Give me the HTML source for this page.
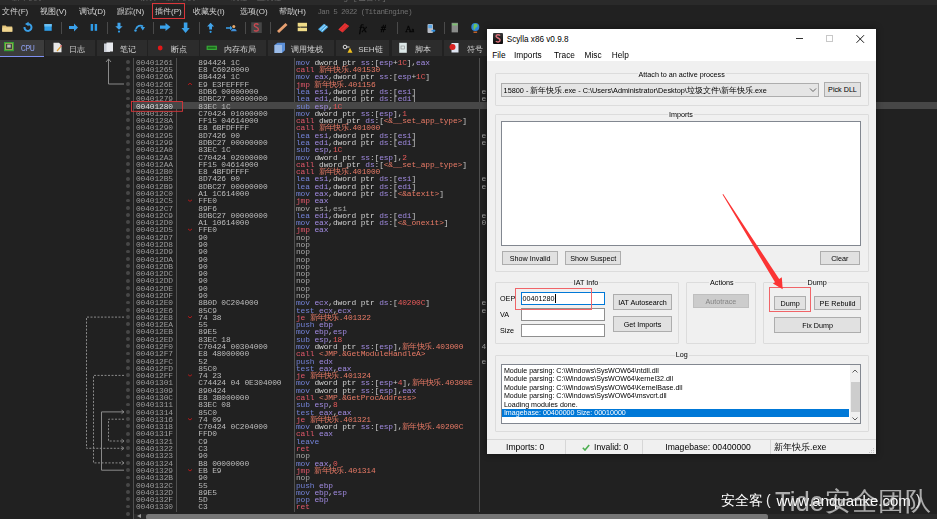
<!DOCTYPE html>
<html><head><meta charset="utf-8">
<style>
*{box-sizing:border-box}
html,body{margin:0;padding:0}
body{width:937px;height:519px;overflow:hidden;background:#212121;position:relative;font-family:"Liberation Sans",sans-serif}
.a{position:absolute}
#title{left:0;top:0;width:937px;height:5px;background:#2a2a2a;overflow:hidden}
#title span{position:absolute;top:-8.3px;left:12px;font-size:8px;color:#6a6a6a;white-space:pre;font-family:"Liberation Mono",monospace}
.mi{position:absolute;top:7px;font-size:8px;color:#d4d4d4;white-space:pre;line-height:10px}
.sep{position:absolute;top:22px;width:1px;height:12px;background:#4a4a4a}
.tab{position:absolute;top:40px;height:16px;background:#2c2c2c;font-size:8px;color:#cfcfcf;line-height:19.5px;white-space:pre}
.tab.act{background:#3c3c3c;color:#8b9be6}
.r{position:absolute;left:0;width:937px;height:7.287px;font-family:"Liberation Mono",monospace;font-size:7.9px;letter-spacing:-0.12px;line-height:7.287px;white-space:pre}
.r span.ad,.r span.hx,.r span.ds,.r span.cm2{top:0.4px}
.r.sel{background:linear-gradient(to right,transparent 134px,#474747 134px)}
.r.sel .ad{color:#dedede}
.dot{position:absolute;left:126.4px;top:1.7px;width:3.8px;height:3.8px;border-radius:50%;background:#474747}
.ad{position:absolute;left:136px;color:#9c9c9c}
.hx{position:absolute;left:198.3px;color:#bcbcbc}
.ds{position:absolute;left:296px}
.cj{font-size:7.6px;letter-spacing:-0.8px;display:inline-block;width:28.8px;white-space:nowrap}
.cm2{position:absolute;left:481.5px;color:#a0a0a0}
.cr{color:#e0586a}.cn{color:#a8a8a8}.cm{color:#7382d6}
.cs{color:#e87a66}.cw{color:#d2d2d2}.cg{color:#a08ae0}.cnum{color:#e85a5a}.cp{color:#c8c8c8}
.vl{position:absolute;width:1px;background:#4f4f4f}
/* scylla */
#sc{left:487px;top:29px;width:388.6px;height:424.6px;background:#f0f0f0;overflow:hidden;box-shadow:0 0 7px rgba(0,0,0,0.45)}
.t{position:absolute;white-space:pre;color:#000;font-size:7.2px;line-height:9px}
.grp{position:absolute;border:1px solid #dcdcdc;border-radius:1px}
.gl{position:absolute;background:#f0f0f0;font-size:7.2px;line-height:9px;color:#000;white-space:pre;padding:0 1px}
.btn{position:absolute;background:#e1e1e1;border:1px solid #adadad;font-size:7.2px;color:#000;text-align:center;white-space:pre;padding-top:1px}
.ed{position:absolute;background:#fff;border:1px solid #8f8f8f}
.lst{position:absolute;background:#fff;border:1px solid #828790}
</style></head><body>
<div class="a" style="left:0;top:0;width:937px;height:519px;will-change:transform">
<div id="title" class="a"><span>新年快乐.exe - PID: 15800 - 模块: 新年快乐.exe - 线程: 主线程 3BB0 - x64dbg [已暂停]</span></div>
<!-- menu -->
<div class="mi" style="left:2px">文件(F)</div>
<div class="mi" style="left:40px">视图(V)</div>
<div class="mi" style="left:78.5px">调试(D)</div>
<div class="mi" style="left:117px">跟踪(N)</div>
<div class="mi" style="left:155px">插件(P)</div>
<div class="mi" style="left:193px">收藏夹(I)</div>
<div class="mi" style="left:240px">选项(O)</div>
<div class="mi" style="left:278.7px">帮助(H)</div>
<div class="mi" style="left:317.4px;color:#6f6f6f;font-family:'Liberation Mono',monospace;font-size:7.6px;letter-spacing:-0.62px;top:6.5px">Jan 5 2022 (TitanEngine)</div>
<div class="a" style="left:151.5px;top:2.5px;width:33.5px;height:16.5px;border:1px solid #d9363a"></div>
<!-- toolbar -->
<div id="tb">
<div class="sep" style="left:61.3px"></div><div class="sep" style="left:107.2px"></div><div class="sep" style="left:152.7px"></div>
<div class="sep" style="left:198.5px"></div><div class="sep" style="left:244.8px"></div><div class="sep" style="left:269.6px"></div>
<div class="sep" style="left:397.4px"></div><div class="sep" style="left:443.6px"></div>
<svg class="a" style="left:0;top:20px" width="490" height="16" viewBox="0 20 490 16">
<!-- folder -->
<path d="M2.2 25.5 h3.5 l1 1 h5.5 v5 h-10z" fill="#e2c37a"/><path d="M2.2 27.5 h10.2 v4.2 h-10.2z" fill="#f0d690"/>
<!-- refresh -->
<path d="M24.5 27 A3.5 3.5 0 1 0 28.2 23.9" stroke="#3aa0e8" stroke-width="2" fill="none"/><path d="M28.6 21.8 v4.4 l-3.6 -2.2z" fill="#3aa0e8"/>
<!-- stop -->
<rect x="44.4" y="24" width="7.3" height="6.8" fill="#2f9ee8"/><rect x="44.4" y="24" width="7.3" height="2.5" fill="#6cc0f2"/>
<!-- arrow right -->
<path d="M69 26 h5 v-2.5 l4 4 l-4 4 v-2.5 h-5z" fill="#3aa0ea"/>
<!-- pause -->
<rect x="90.7" y="24" width="2.4" height="6.8" fill="#2e9ce8"/><rect x="94.7" y="24" width="2.4" height="6.8" fill="#2e9ce8"/>
<!-- step into -->
<path d="M117.5 22.7 h3 v3.5 h2.2 l-3.7 3.5 l-3.7 -3.5 h2.2z" fill="#42a4ea"/><circle cx="119" cy="31.6" r="1.1" fill="#2e9ce8"/>
<!-- step over -->
<path d="M136 29 A4.5 4.5 0 0 1 143 26.5" stroke="#3ba0e6" stroke-width="1.8" fill="none"/><path d="M140.5 27 h4.5 l-2.2 3.5z" fill="#3ba0e6"/><circle cx="135.5" cy="30.5" r="1.2" fill="#3ba0e6"/>
<!-- big arrow right -->
<path d="M160 25.5 h5.5 v-2.4 l5 4 l-5 4 v-2.4 h-5.5z" fill="#3aa2ea"/>
<!-- down arrow -->
<path d="M183.8 22.5 h3.6 v5.5 h2.3 l-4.1 5 l-4.1 -5 h2.3z" fill="#3aa2ea"/>
<!-- up arrow -->
<path d="M210.6 22.7 l3.5 3.7 h-2.1 v3 h-2.8 v-3 h-2.1z" fill="#42a4ea"/><circle cx="210.6" cy="31.8" r="1.1" fill="#2e9ce8"/>
<!-- arrow+person -->
<path d="M226 27.3 h4 v-1.6 l2.5 2.3 l-2.5 2.3 v-1.6 h-4z" fill="#3aa0ea"/><circle cx="233.8" cy="26.5" r="1.5" fill="#e8a868"/><path d="M231 31.3 a2.8 2.5 0 0 1 5.6 0z" fill="#3e8ed8"/>
<!-- S icon -->
<rect x="251.2" y="22.3" width="10.6" height="10.7" fill="#464646"/>
<!-- bandage -->
<path d="M277 31 l8.5 -8 l2 2 l-8.5 8z" fill="#e8a070"/>
<!-- bubbles -->
<rect x="297.7" y="22.8" width="9.3" height="3.8" fill="#f0dc88"/><rect x="297.7" y="27.7" width="9.3" height="3.5" fill="#f0dc88"/><path d="M299 26.6 l1.5 1.2 v-1.2z" fill="#f0dc88"/>
<!-- blue striped -->
<path d="M318 29.3 l6 -5.6 l4.3 3.2 l-6 5.6z" fill="#4aaee8"/><path d="M319.8 29.6 l5.4 -5" stroke="#e8f0ff" stroke-width="0.7"/><path d="M321.8 31.1 l5.4 -5" stroke="#e8f0ff" stroke-width="0.7"/>
<!-- red striped -->
<path d="M338.3 29.5 l6.6 -6.4 l4.3 3 l-6.6 6.4z" fill="#e83434"/><path d="M340.3 30 l5.6 -5.3 M342.3 31.3 l5.6 -5.3" stroke="#b01818" stroke-width="0.5"/>
<!-- fx # Aa -->
<text x="359" y="31.5" font-family="Liberation Serif" font-style="italic" font-size="11" fill="#050505" stroke="#050505" stroke-width="0.3">fx</text>
<text x="380.8" y="31.5" font-family="Liberation Serif" font-style="italic" font-size="10" fill="#050505" stroke="#050505" stroke-width="0.4">#</text>
<text x="405.3" y="31.5" font-family="Liberation Serif" font-size="9" fill="#050505" stroke="#050505" stroke-width="0.3">A</text><text x="411.5" y="31.5" font-family="Liberation Serif" font-size="6" fill="#050505" stroke="#050505" stroke-width="0.3">a</text>
<!-- phone -->
<rect x="427.5" y="23.9" width="5.5" height="9" rx="1" fill="#b8bcc4"/><rect x="428.3" y="24.7" width="3.9" height="3.5" fill="#5aa8e8"/><path d="M431.5 30 h2 v-1.2 l2.1 1.9 l-2.1 1.9 v-1.2 h-2z" fill="#2e90e0"/>
<!-- calculator -->
<rect x="451.6" y="22.8" width="6.4" height="9.6" fill="#8a8c8a"/><rect x="452.2" y="23.6" width="5.2" height="1.8" fill="#7cc070"/>
<!-- globe -->
<circle cx="475.3" cy="27" r="4" fill="#2e86dc"/><path d="M474 24 q2.5 -1 3.5 1 q0.5 2 -1.5 2.5 q-1 1 -1.5 2.5 q-1.5 -1 -1 -3z" fill="#6cc05a"/><rect x="473.5" y="31.6" width="3.6" height="1.2" fill="#e07030"/>
</svg>
<svg class="a" style="left:251.2px;top:22.3px" width="11" height="11"><path d="M7.4 2.7 C6.3 1.3 3.3 1.4 3.3 3.4 C3.3 5.3 7.4 5 7.4 7.2 C7.4 9.3 4.2 9.6 3.1 8.2" stroke="#c84850" stroke-width="1.4" fill="none"/></svg>
</div>
<!-- tabs -->
<div id="tabs">
<div class="tab act" style="left:0;width:43.8px"><span class="a" style="left:20.8px;font-family:'Liberation Mono',monospace;font-size:8.5px;letter-spacing:-0.6px">CPU</span></div>
<div class="a" style="left:0;top:55.8px;width:43.8px;height:1.3px;background:#7e8ff0"></div>
<div class="tab" style="left:45.1px;width:50.4px"><span class="a" style="left:23.6px">日志</span></div>
<div class="tab" style="left:97.2px;width:49.5px"><span class="a" style="left:23.1px">笔记</span></div>
<div class="tab" style="left:148.4px;width:50.4px"><span class="a" style="left:23.1px">断点</span></div>
<div class="tab" style="left:200.1px;width:65.8px"><span class="a" style="left:23.9px">内存布局</span></div>
<div class="tab" style="left:268.1px;width:66.1px"><span class="a" style="left:23.4px">调用堆栈</span></div>
<div class="tab" style="left:336px;width:53.4px"><span class="a" style="left:22.2px">SEH链</span></div>
<div class="tab" style="left:391.5px;width:50.4px"><span class="a" style="left:23px">脚本</span></div>
<div class="tab" style="left:443.6px;width:50px"><span class="a" style="left:23px">符号</span></div>
<svg class="a" style="left:0;top:40px" width="490" height="16" viewBox="0 40 490 16">
<rect x="4" y="42" width="9.9" height="9.2" fill="#35a035"/><rect x="5.4" y="43.2" width="7.1" height="6.6" fill="#d8c860"/><rect x="5.9" y="43.7" width="6.1" height="5.6" fill="#404040"/><rect x="7.2" y="44.6" width="3.5" height="3" fill="#bbb"/>
<path d="M53.5 42.8 h5.5 l2.5 2.5 v7 h-8z" fill="#e8e8e8"/><path d="M57 51 l3.5 -4" stroke="#e0a030" stroke-width="1.2"/><circle cx="61" cy="46" r="0.8" fill="#e03030"/>
<rect x="104" y="43.5" width="6" height="8.5" fill="#c8ccd4"/><rect x="106.5" y="42.5" width="6.5" height="9" fill="#e8eaee"/>
<circle cx="160.2" cy="48" r="2.4" fill="#e01818"/>
<rect x="206.6" y="45.7" width="10.3" height="4.3" fill="#38a838"/><rect x="207.8" y="46.8" width="7.9" height="2" fill="#1e6e1e"/>
<path d="M274.5 45 l3 -2.2 h7.5 v7.5 l-3 2.7 h-7.5z" fill="#5b8fd8"/><rect x="274.5" y="45" width="7.5" height="8" fill="#9cbce8"/>
<circle cx="345" cy="47" r="1.8" fill="none" stroke="#ddd" stroke-width="1"/><path d="M346.5 47 h3" stroke="#ddd" stroke-width="1"/><path d="M347.5 52.8 l2.5 -5 l2.5 5z" fill="#f0c020"/>
<rect x="399.2" y="42.8" width="7.6" height="10" fill="#dde8e8"/><rect x="401" y="46" width="3.5" height="3" fill="none" stroke="#888" stroke-width="0.6"/>
<rect x="451.5" y="43" width="7" height="9.5" fill="#dfe6f2"/><circle cx="452.5" cy="47" r="3" fill="#d82020"/>
</svg>
</div>
<!-- disasm -->
<div class="vl" style="left:133px;top:57.5px;height:462px"></div>
<div class="vl" style="left:176.3px;top:57.5px;height:454px"></div>
<div class="vl" style="left:293.5px;top:57.5px;height:454px"></div>
<div class="vl" style="left:478.5px;top:57.5px;height:454px"></div>
<div class="r" style="top:58.46px"><i class="dot"></i><span class="ad">00401261</span><span class="hx">894424 1C</span><span class="ds"><span class="cm">mov</span> <span class="cw">dword ptr</span><span class="cp"> </span><span class="cg">ss</span><span class="cp">:</span><span class="cp">[</span><span class="cg">esp</span><span class="cp">+</span><span class="cnum">1C</span><span class="cp">]</span><span class="cp">,</span><span class="cg">eax</span></span><span class="cm2"></span></div>
<div class="r" style="top:65.75px"><i class="dot"></i><span class="ad">00401265</span><span class="hx">E8 C6020000</span><span class="ds"><span class="cr">call</span> <span class="cs"><span class="cj">新年快乐</span>.401530</span></span><span class="cm2"></span></div>
<div class="r" style="top:73.03px"><i class="dot"></i><span class="ad">0040126A</span><span class="hx">8B4424 1C</span><span class="ds"><span class="cm">mov</span> <span class="cg">eax</span><span class="cp">,</span><span class="cw">dword ptr</span><span class="cp"> </span><span class="cg">ss</span><span class="cp">:</span><span class="cp">[</span><span class="cg">esp</span><span class="cp">+</span><span class="cnum">1C</span><span class="cp">]</span></span><span class="cm2"></span></div>
<div class="r" style="top:80.32px"><i class="dot"></i><span class="ad">0040126E</span><span class="hx">E9 E3FEFFFF</span><span class="ds"><span class="cr">jmp</span> <span class="cs"><span class="cj">新年快乐</span>.401156</span></span><span class="cm2"></span></div>
<div class="r" style="top:87.61px"><i class="dot"></i><span class="ad">00401273</span><span class="hx">8DB6 00000000</span><span class="ds"><span class="cm">lea</span> <span class="cg">esi</span><span class="cp">,</span><span class="cw">dword ptr</span><span class="cp"> </span><span class="cg">ds</span><span class="cp">:</span><span class="cp">[</span><span class="cg">esi</span><span class="cp">]</span></span><span class="cm2">e</span></div>
<div class="r" style="top:94.90px"><i class="dot"></i><span class="ad">00401279</span><span class="hx">8DBC27 00000000</span><span class="ds"><span class="cm">lea</span> <span class="cg">edi</span><span class="cp">,</span><span class="cw">dword ptr</span><span class="cp"> </span><span class="cg">ds</span><span class="cp">:</span><span class="cp">[</span><span class="cg">edi</span><span class="cp">]</span></span><span class="cm2">e</span></div>
<div class="r sel" style="top:102.18px"><i class="dot"></i><span class="ad">00401280</span><span class="hx">83EC 1C</span><span class="ds"><span class="cm">sub</span> <span class="cg">esp</span><span class="cp">,</span><span class="cnum">1C</span></span><span class="cm2"></span></div>
<div class="r" style="top:109.47px"><i class="dot"></i><span class="ad">00401283</span><span class="hx">C70424 01000000</span><span class="ds"><span class="cm">mov</span> <span class="cw">dword ptr</span><span class="cp"> </span><span class="cg">ss</span><span class="cp">:</span><span class="cp">[</span><span class="cg">esp</span><span class="cp">]</span><span class="cp">,</span><span class="cnum">1</span></span><span class="cm2"></span></div>
<div class="r" style="top:116.76px"><i class="dot"></i><span class="ad">0040128A</span><span class="hx">FF15 04614000</span><span class="ds"><span class="cr">call</span> <span class="cw">dword ptr</span><span class="cp"> </span><span class="cg">ds</span><span class="cp">:</span><span class="cp">[</span><span class="cs">&lt;&amp;__set_app_type&gt;</span><span class="cp">]</span></span><span class="cm2"></span></div>
<div class="r" style="top:124.04px"><i class="dot"></i><span class="ad">00401290</span><span class="hx">E8 6BFDFFFF</span><span class="ds"><span class="cr">call</span> <span class="cs"><span class="cj">新年快乐</span>.401000</span></span><span class="cm2"></span></div>
<div class="r" style="top:131.33px"><i class="dot"></i><span class="ad">00401295</span><span class="hx">8D7426 00</span><span class="ds"><span class="cm">lea</span> <span class="cg">esi</span><span class="cp">,</span><span class="cw">dword ptr</span><span class="cp"> </span><span class="cg">ds</span><span class="cp">:</span><span class="cp">[</span><span class="cg">esi</span><span class="cp">]</span></span><span class="cm2">e</span></div>
<div class="r" style="top:138.62px"><i class="dot"></i><span class="ad">00401299</span><span class="hx">8DBC27 00000000</span><span class="ds"><span class="cm">lea</span> <span class="cg">edi</span><span class="cp">,</span><span class="cw">dword ptr</span><span class="cp"> </span><span class="cg">ds</span><span class="cp">:</span><span class="cp">[</span><span class="cg">edi</span><span class="cp">]</span></span><span class="cm2">e</span></div>
<div class="r" style="top:145.90px"><i class="dot"></i><span class="ad">004012A0</span><span class="hx">83EC 1C</span><span class="ds"><span class="cm">sub</span> <span class="cg">esp</span><span class="cp">,</span><span class="cnum">1C</span></span><span class="cm2"></span></div>
<div class="r" style="top:153.19px"><i class="dot"></i><span class="ad">004012A3</span><span class="hx">C70424 02000000</span><span class="ds"><span class="cm">mov</span> <span class="cw">dword ptr</span><span class="cp"> </span><span class="cg">ss</span><span class="cp">:</span><span class="cp">[</span><span class="cg">esp</span><span class="cp">]</span><span class="cp">,</span><span class="cnum">2</span></span><span class="cm2"></span></div>
<div class="r" style="top:160.48px"><i class="dot"></i><span class="ad">004012AA</span><span class="hx">FF15 04614000</span><span class="ds"><span class="cr">call</span> <span class="cw">dword ptr</span><span class="cp"> </span><span class="cg">ds</span><span class="cp">:</span><span class="cp">[</span><span class="cs">&lt;&amp;__set_app_type&gt;</span><span class="cp">]</span></span><span class="cm2"></span></div>
<div class="r" style="top:167.76px"><i class="dot"></i><span class="ad">004012B0</span><span class="hx">E8 4BFDFFFF</span><span class="ds"><span class="cr">call</span> <span class="cs"><span class="cj">新年快乐</span>.401000</span></span><span class="cm2"></span></div>
<div class="r" style="top:175.05px"><i class="dot"></i><span class="ad">004012B5</span><span class="hx">8D7426 00</span><span class="ds"><span class="cm">lea</span> <span class="cg">esi</span><span class="cp">,</span><span class="cw">dword ptr</span><span class="cp"> </span><span class="cg">ds</span><span class="cp">:</span><span class="cp">[</span><span class="cg">esi</span><span class="cp">]</span></span><span class="cm2">e</span></div>
<div class="r" style="top:182.34px"><i class="dot"></i><span class="ad">004012B9</span><span class="hx">8DBC27 00000000</span><span class="ds"><span class="cm">lea</span> <span class="cg">edi</span><span class="cp">,</span><span class="cw">dword ptr</span><span class="cp"> </span><span class="cg">ds</span><span class="cp">:</span><span class="cp">[</span><span class="cg">edi</span><span class="cp">]</span></span><span class="cm2">e</span></div>
<div class="r" style="top:189.63px"><i class="dot"></i><span class="ad">004012C0</span><span class="hx">A1 1C614000</span><span class="ds"><span class="cm">mov</span> <span class="cg">eax</span><span class="cp">,</span><span class="cw">dword ptr</span><span class="cp"> </span><span class="cg">ds</span><span class="cp">:</span><span class="cp">[</span><span class="cs">&lt;&amp;atexit&gt;</span><span class="cp">]</span></span><span class="cm2"></span></div>
<div class="r" style="top:196.91px"><i class="dot"></i><span class="ad">004012C5</span><span class="hx">FFE0</span><span class="ds"><span class="cr">jmp</span> <span class="cg">eax</span></span><span class="cm2"></span></div>
<div class="r" style="top:204.20px"><i class="dot"></i><span class="ad">004012C7</span><span class="hx">89F6</span><span class="ds"><span class="cn">mov esi,esi</span></span><span class="cm2"></span></div>
<div class="r" style="top:211.49px"><i class="dot"></i><span class="ad">004012C9</span><span class="hx">8DBC27 00000000</span><span class="ds"><span class="cm">lea</span> <span class="cg">edi</span><span class="cp">,</span><span class="cw">dword ptr</span><span class="cp"> </span><span class="cg">ds</span><span class="cp">:</span><span class="cp">[</span><span class="cg">edi</span><span class="cp">]</span></span><span class="cm2">e</span></div>
<div class="r" style="top:218.77px"><i class="dot"></i><span class="ad">004012D0</span><span class="hx">A1 10614000</span><span class="ds"><span class="cm">mov</span> <span class="cg">eax</span><span class="cp">,</span><span class="cw">dword ptr</span><span class="cp"> </span><span class="cg">ds</span><span class="cp">:</span><span class="cp">[</span><span class="cs">&lt;&amp;_onexit&gt;</span><span class="cp">]</span></span><span class="cm2">0</span></div>
<div class="r" style="top:226.06px"><i class="dot"></i><span class="ad">004012D5</span><span class="hx">FFE0</span><span class="ds"><span class="cr">jmp</span> <span class="cg">eax</span></span><span class="cm2"></span></div>
<div class="r" style="top:233.35px"><i class="dot"></i><span class="ad">004012D7</span><span class="hx">90</span><span class="ds"><span class="cn">nop</span></span><span class="cm2"></span></div>
<div class="r" style="top:240.64px"><i class="dot"></i><span class="ad">004012D8</span><span class="hx">90</span><span class="ds"><span class="cn">nop</span></span><span class="cm2"></span></div>
<div class="r" style="top:247.92px"><i class="dot"></i><span class="ad">004012D9</span><span class="hx">90</span><span class="ds"><span class="cn">nop</span></span><span class="cm2"></span></div>
<div class="r" style="top:255.21px"><i class="dot"></i><span class="ad">004012DA</span><span class="hx">90</span><span class="ds"><span class="cn">nop</span></span><span class="cm2"></span></div>
<div class="r" style="top:262.50px"><i class="dot"></i><span class="ad">004012DB</span><span class="hx">90</span><span class="ds"><span class="cn">nop</span></span><span class="cm2"></span></div>
<div class="r" style="top:269.78px"><i class="dot"></i><span class="ad">004012DC</span><span class="hx">90</span><span class="ds"><span class="cn">nop</span></span><span class="cm2"></span></div>
<div class="r" style="top:277.07px"><i class="dot"></i><span class="ad">004012DD</span><span class="hx">90</span><span class="ds"><span class="cn">nop</span></span><span class="cm2"></span></div>
<div class="r" style="top:284.36px"><i class="dot"></i><span class="ad">004012DE</span><span class="hx">90</span><span class="ds"><span class="cn">nop</span></span><span class="cm2"></span></div>
<div class="r" style="top:291.64px"><i class="dot"></i><span class="ad">004012DF</span><span class="hx">90</span><span class="ds"><span class="cn">nop</span></span><span class="cm2"></span></div>
<div class="r" style="top:298.93px"><i class="dot"></i><span class="ad">004012E0</span><span class="hx">8B0D 0C204000</span><span class="ds"><span class="cm">mov</span> <span class="cg">ecx</span><span class="cp">,</span><span class="cw">dword ptr</span><span class="cp"> </span><span class="cg">ds</span><span class="cp">:</span><span class="cp">[</span><span class="cnum">40200C</span><span class="cp">]</span></span><span class="cm2">e</span></div>
<div class="r" style="top:306.22px"><i class="dot"></i><span class="ad">004012E6</span><span class="hx">85C9</span><span class="ds"><span class="cm">test</span> <span class="cg">ecx</span><span class="cp">,</span><span class="cg">ecx</span></span><span class="cm2">e</span></div>
<div class="r" style="top:313.50px"><i class="dot"></i><span class="ad">004012E8</span><span class="hx">74 38</span><span class="ds"><span class="cr">je</span> <span class="cs"><span class="cj">新年快乐</span>.401322</span></span><span class="cm2"></span></div>
<div class="r" style="top:320.79px"><i class="dot"></i><span class="ad">004012EA</span><span class="hx">55</span><span class="ds"><span class="cm">push</span> <span class="cg">ebp</span></span><span class="cm2"></span></div>
<div class="r" style="top:328.08px"><i class="dot"></i><span class="ad">004012EB</span><span class="hx">89E5</span><span class="ds"><span class="cm">mov</span> <span class="cg">ebp</span><span class="cp">,</span><span class="cg">esp</span></span><span class="cm2"></span></div>
<div class="r" style="top:335.37px"><i class="dot"></i><span class="ad">004012ED</span><span class="hx">83EC 18</span><span class="ds"><span class="cm">sub</span> <span class="cg">esp</span><span class="cp">,</span><span class="cnum">18</span></span><span class="cm2"></span></div>
<div class="r" style="top:342.65px"><i class="dot"></i><span class="ad">004012F0</span><span class="hx">C70424 00304000</span><span class="ds"><span class="cm">mov</span> <span class="cw">dword ptr</span><span class="cp"> </span><span class="cg">ss</span><span class="cp">:</span><span class="cp">[</span><span class="cg">esp</span><span class="cp">]</span><span class="cp">,</span><span class="cs"><span class="cj">新年快乐</span>.403000</span></span><span class="cm2">4</span></div>
<div class="r" style="top:349.94px"><i class="dot"></i><span class="ad">004012F7</span><span class="hx">E8 48000000</span><span class="ds"><span class="cr">call</span> <span class="cs">&lt;JMP.&amp;GetModuleHandleA&gt;</span></span><span class="cm2"></span></div>
<div class="r" style="top:357.23px"><i class="dot"></i><span class="ad">004012FC</span><span class="hx">52</span><span class="ds"><span class="cm">push</span> <span class="cg">edx</span></span><span class="cm2">e</span></div>
<div class="r" style="top:364.51px"><i class="dot"></i><span class="ad">004012FD</span><span class="hx">85C0</span><span class="ds"><span class="cm">test</span> <span class="cg">eax</span><span class="cp">,</span><span class="cg">eax</span></span><span class="cm2"></span></div>
<div class="r" style="top:371.80px"><i class="dot"></i><span class="ad">004012FF</span><span class="hx">74 23</span><span class="ds"><span class="cr">je</span> <span class="cs"><span class="cj">新年快乐</span>.401324</span></span><span class="cm2"></span></div>
<div class="r" style="top:379.09px"><i class="dot"></i><span class="ad">00401301</span><span class="hx">C74424 04 0E304000</span><span class="ds"><span class="cm">mov</span> <span class="cw">dword ptr</span><span class="cp"> </span><span class="cg">ss</span><span class="cp">:</span><span class="cp">[</span><span class="cg">esp</span><span class="cp">+</span><span class="cnum">4</span><span class="cp">]</span><span class="cp">,</span><span class="cs"><span class="cj">新年快乐</span>.40300E</span></span><span class="cm2"></span></div>
<div class="r" style="top:386.38px"><i class="dot"></i><span class="ad">00401309</span><span class="hx">890424</span><span class="ds"><span class="cm">mov</span> <span class="cw">dword ptr</span><span class="cp"> </span><span class="cg">ss</span><span class="cp">:</span><span class="cp">[</span><span class="cg">esp</span><span class="cp">]</span><span class="cp">,</span><span class="cg">eax</span></span><span class="cm2"></span></div>
<div class="r" style="top:393.66px"><i class="dot"></i><span class="ad">0040130C</span><span class="hx">E8 3B000000</span><span class="ds"><span class="cr">call</span> <span class="cs">&lt;JMP.&amp;GetProcAddress&gt;</span></span><span class="cm2"></span></div>
<div class="r" style="top:400.95px"><i class="dot"></i><span class="ad">00401311</span><span class="hx">83EC 08</span><span class="ds"><span class="cm">sub</span> <span class="cg">esp</span><span class="cp">,</span><span class="cnum">8</span></span><span class="cm2"></span></div>
<div class="r" style="top:408.24px"><i class="dot"></i><span class="ad">00401314</span><span class="hx">85C0</span><span class="ds"><span class="cm">test</span> <span class="cg">eax</span><span class="cp">,</span><span class="cg">eax</span></span><span class="cm2"></span></div>
<div class="r" style="top:415.52px"><i class="dot"></i><span class="ad">00401316</span><span class="hx">74 09</span><span class="ds"><span class="cr">je</span> <span class="cs"><span class="cj">新年快乐</span>.401321</span></span><span class="cm2"></span></div>
<div class="r" style="top:422.81px"><i class="dot"></i><span class="ad">00401318</span><span class="hx">C70424 0C204000</span><span class="ds"><span class="cm">mov</span> <span class="cw">dword ptr</span><span class="cp"> </span><span class="cg">ss</span><span class="cp">:</span><span class="cp">[</span><span class="cg">esp</span><span class="cp">]</span><span class="cp">,</span><span class="cs"><span class="cj">新年快乐</span>.40200C</span></span><span class="cm2"></span></div>
<div class="r" style="top:430.10px"><i class="dot"></i><span class="ad">0040131F</span><span class="hx">FFD0</span><span class="ds"><span class="cr">call</span> <span class="cg">eax</span></span><span class="cm2"></span></div>
<div class="r" style="top:437.38px"><i class="dot"></i><span class="ad">00401321</span><span class="hx">C9</span><span class="ds"><span class="cm">leave</span></span><span class="cm2"></span></div>
<div class="r" style="top:444.67px"><i class="dot"></i><span class="ad">00401322</span><span class="hx">C3</span><span class="ds"><span class="cr">ret</span></span><span class="cm2"></span></div>
<div class="r" style="top:451.96px"><i class="dot"></i><span class="ad">00401323</span><span class="hx">90</span><span class="ds"><span class="cn">nop</span></span><span class="cm2"></span></div>
<div class="r" style="top:459.24px"><i class="dot"></i><span class="ad">00401324</span><span class="hx">B8 00000000</span><span class="ds"><span class="cm">mov</span> <span class="cg">eax</span><span class="cp">,</span><span class="cnum">0</span></span><span class="cm2"></span></div>
<div class="r" style="top:466.53px"><i class="dot"></i><span class="ad">00401329</span><span class="hx">EB E9</span><span class="ds"><span class="cr">jmp</span> <span class="cs"><span class="cj">新年快乐</span>.401314</span></span><span class="cm2"></span></div>
<div class="r" style="top:473.82px"><i class="dot"></i><span class="ad">0040132B</span><span class="hx">90</span><span class="ds"><span class="cn">nop</span></span><span class="cm2"></span></div>
<div class="r" style="top:481.11px"><i class="dot"></i><span class="ad">0040132C</span><span class="hx">55</span><span class="ds"><span class="cm">push</span> <span class="cg">ebp</span></span><span class="cm2"></span></div>
<div class="r" style="top:488.39px"><i class="dot"></i><span class="ad">0040132D</span><span class="hx">89E5</span><span class="ds"><span class="cm">mov</span> <span class="cg">ebp</span><span class="cp">,</span><span class="cg">esp</span></span><span class="cm2"></span></div>
<div class="r" style="top:495.68px"><i class="dot"></i><span class="ad">0040132F</span><span class="hx">5D</span><span class="ds"><span class="cm">pop</span> <span class="cg">ebp</span></span><span class="cm2"></span></div>
<div class="r" style="top:502.97px"><i class="dot"></i><span class="ad">00401330</span><span class="hx">C3</span><span class="ds"><span class="cr">ret</span></span><span class="cm2"></span></div>
<div class="r" style="top:510.25px"><i class="dot"></i></div>
<svg class="a" style="left:0;top:0" width="200" height="519" viewBox="0 0 200 519">
<g stroke="#8a8a8a" stroke-width="1" fill="none">
<path d="M108.5 84.0 V58.8 M108.5 84.0 H124"/>
<path d="M106 62 l2.5 -3 l2.5 3"/>
</g>
<g stroke="#8a8a8a" stroke-width="1" fill="none" stroke-dasharray="2 1.5">
<path d="M124 317.1 H86.5 V448.3 H124"/>
<path d="M124 375.4 H93.5 V462.9 H124"/>
<path d="M124 419.2 H108.5 V441.0 H124"/>
</g>
<g stroke="#8a8a8a" stroke-width="1" fill="none">
<path d="M124 470.2 H101.5 V411.9 H124"/>
<path d="M121.5 446.5 l2.5 1.8 l-2.5 1.8 M121.5 461.1 l2.5 1.8 l-2.5 1.8 M121.5 439.2 l2.5 1.8 l-2.5 1.8 M121.5 410.1 l2.5 1.8 l-2.5 1.8"/>
</g>
<g stroke="#c01818" stroke-width="0.9" fill="none">
<path d="M188 84.8 l2 -1.6 l2 1.6"/>
<path d="M188 199.8 l2 1.6 l2 -1.6"/>
<path d="M188 228.9 l2 1.6 l2 -1.6"/>
<path d="M188 316.3 l2 1.6 l2 -1.6"/>
<path d="M188 374.6 l2 1.6 l2 -1.6"/>
<path d="M188 418.4 l2 1.6 l2 -1.6"/>
<path d="M188 469.4 l2 1.6 l2 -1.6"/>
</g>
<rect x="131.5" y="101.5" width="51" height="9.8" fill="none" stroke="#d9363a" stroke-width="0.9"/>
</svg>
<!-- hscroll -->
<div class="a" style="left:134px;top:513.5px;width:803px;height:6px;background:#2a2a2a"></div>
<div class="a" style="left:145.5px;top:514.2px;width:622px;height:6px;background:#767676;border-radius:2.5px"></div>
<div class="a" style="left:137px;top:514px;width:0;height:0;border-top:2.5px solid transparent;border-bottom:2.5px solid transparent;border-right:4px solid #9a9a9a"></div>
</div>
<!-- scylla -->
<div id="sc" class="a">
<div class="a" style="left:0;top:0;width:389px;height:32px;background:#fff"></div>
<div class="a" style="left:6px;top:4.2px;width:10.2px;height:10.4px;background:linear-gradient(#3a3a3a,#0a0a0a);border-radius:1px"></div>
<svg class="a" style="left:6px;top:4.2px" width="11" height="11"><path d="M7 2.6 C6 1.2 3.1 1.3 3.1 3.3 C3.1 5.2 7.1 4.9 7.1 7.1 C7.1 9.2 4 9.5 2.9 8.1" stroke="#d8707a" stroke-width="1.5" fill="none"/></svg>
<div class="t" style="left:19.7px;top:6px;font-size:8.2px;line-height:10px">Scylla x86 v0.9.8</div>
<div class="a" style="left:308.8px;top:9.3px;width:7.4px;height:0.8px;background:#333"></div>
<div class="a" style="left:339px;top:6px;width:7px;height:6.6px;border:1px solid #c8c8c8"></div>
<svg class="a" style="left:366.8px;top:5px" width="12" height="10"><path d="M2.5 1.2 L10 8.8 M10 1.2 L2.5 8.8" stroke="#111" stroke-width="0.95"/></svg>
<div class="t" style="left:5.2px;top:22.2px;font-size:8.3px;line-height:9.5px">File</div>
<div class="t" style="left:27px;top:22.2px;font-size:8.3px;line-height:9.5px">Imports</div>
<div class="t" style="left:67px;top:22.2px;font-size:8.3px;line-height:9.5px">Trace</div>
<div class="t" style="left:97.6px;top:22.2px;font-size:8.3px;line-height:9.5px">Misc</div>
<div class="t" style="left:124.7px;top:22.2px;font-size:8.3px;line-height:9.5px">Help</div>

<div class="grp" style="left:7.5px;top:44.2px;width:374px;height:32.4px"></div>
<div class="gl" style="left:150.5px;top:41px">Attach to an active process</div>
<div class="a" style="left:14px;top:54px;width:317.6px;height:13.8px;background:#e5e5e5;border:1px solid #adadad"></div>
<div class="t" style="left:16.6px;top:56.5px;font-size:7.3px">15800 - <span style="font-size:8.4px;display:inline-block;width:32px;white-space:nowrap">新年快乐</span>.exe - C:\Users\Administrator\Desktop\<span style="font-size:8.4px;display:inline-block;width:32px;white-space:nowrap">垃圾文件</span>\<span style="font-size:8.4px;display:inline-block;width:32px;white-space:nowrap">新年快乐</span>.exe</div>
<svg class="a" style="left:322px;top:58px" width="8" height="6"><path d="M1 1.5 L4 4.5 L7 1.5" stroke="#555" stroke-width="0.9" fill="none"/></svg>
<div class="btn" style="left:337.3px;top:53.2px;width:36.4px;height:14.5px;line-height:12.5px">Pick DLL</div>

<div class="grp" style="left:7.5px;top:85px;width:374px;height:157.5px"></div>
<div class="gl" style="left:181px;top:81px">Imports</div>
<div class="lst" style="left:14.2px;top:92.2px;width:360.3px;height:125.3px"></div>
<div class="btn" style="left:15px;top:222px;width:56.4px;height:13.8px;line-height:11.8px">Show Invalid</div>
<div class="btn" style="left:78.2px;top:222px;width:56.1px;height:13.8px;line-height:11.8px">Show Suspect</div>
<div class="btn" style="left:332.5px;top:222.3px;width:40.5px;height:13.5px;line-height:11.5px">Clear</div>

<div class="grp" style="left:7.7px;top:252.7px;width:184.8px;height:61.9px"></div>
<div class="gl" style="left:85.7px;top:249px">IAT Info</div>
<div class="t" style="left:13px;top:264.7px">OEP</div>
<div class="t" style="left:13px;top:281px">VA</div>
<div class="t" style="left:13px;top:297.3px">Size</div>
<div class="ed" style="left:33.5px;top:262.8px;width:84.8px;height:12.8px;border-color:#0078d7"></div>
<div class="t" style="left:35.5px;top:264.7px">00401280</div>
<div class="a" style="left:67.5px;top:265px;width:0.8px;height:8.5px;background:#000"></div>
<div class="ed" style="left:33.5px;top:279.4px;width:84.8px;height:12.8px"></div>
<div class="ed" style="left:33.5px;top:295.4px;width:84.8px;height:12.8px"></div>
<div class="btn" style="left:126.2px;top:265.1px;width:58.7px;height:15.8px;line-height:13.8px">IAT Autosearch</div>
<div class="btn" style="left:126.2px;top:287.3px;width:58.7px;height:15.6px;line-height:13.6px">Get Imports</div>
<div class="a" style="left:27.5px;top:258.5px;width:77px;height:22px;border:1px solid #f06468"></div>

<div class="grp" style="left:199.4px;top:252.7px;width:69.4px;height:61.9px"></div>
<div class="gl" style="left:222px;top:249px">Actions</div>
<div class="btn" style="left:206.2px;top:264.5px;width:55.5px;height:14.3px;line-height:12.3px;background:#cccccc;border-color:#bfbfbf;color:#838383">Autotrace</div>

<div class="grp" style="left:276.2px;top:252.7px;width:105.7px;height:61.9px"></div>
<div class="gl" style="left:319.5px;top:249px">Dump</div>
<div class="btn" style="left:286.9px;top:266.6px;width:32.5px;height:14.4px;line-height:12.4px">Dump</div>
<div class="btn" style="left:326.8px;top:266.6px;width:47.6px;height:14.4px;line-height:12.4px">PE Rebuild</div>
<div class="btn" style="left:286.9px;top:288.4px;width:87.5px;height:16px;line-height:14px">Fix Dump</div>
<div class="a" style="left:282.2px;top:258px;width:41.4px;height:25px;border:1px solid #f06468"></div>

<div class="grp" style="left:7.7px;top:325.5px;width:374px;height:77px"></div>
<div class="gl" style="left:187.7px;top:321.4px">Log</div>
<div class="lst" style="left:14.1px;top:335.1px;width:360.4px;height:59.6px"></div>
<div class="t" style="left:16.9px;top:337.6px;line-height:8.55px;font-size:7.1px">Module parsing: C:\Windows\SysWOW64\ntdll.dll
Module parsing: C:\Windows\SysWOW64\kernel32.dll
Module parsing: C:\Windows\SysWOW64\KernelBase.dll
Module parsing: C:\Windows\SysWOW64\msvcrt.dll
Loading modules done.</div>
<div class="a" style="left:15px;top:379.5px;width:347px;height:8.3px;background:#0078d7"></div>
<div class="t" style="left:16.9px;top:380.4px;line-height:8.55px;font-size:7.1px;color:#fff">Imagebase: 00400000 Size: 00010000</div>
<div class="a" style="left:362.5px;top:336px;width:10.5px;height:57.8px;background:#f0f0f0"></div>
<div class="a" style="left:363.5px;top:352.6px;width:9px;height:30.1px;background:#cdcdcd"></div>
<svg class="a" style="left:363px;top:339px" width="10" height="6"><path d="M2.5 4.5 L5 2 L7.5 4.5" stroke="#606060" stroke-width="1" fill="none"/></svg>
<svg class="a" style="left:363px;top:386.5px" width="10" height="6"><path d="M2.5 1.5 L5 4 L7.5 1.5" stroke="#606060" stroke-width="1" fill="none"/></svg>

<div class="a" style="left:0;top:410.3px;width:389px;height:1px;background:#d7d7d7"></div>
<div class="a" style="left:77.7px;top:411px;width:1px;height:14px;background:#d7d7d7"></div>
<div class="a" style="left:155px;top:411px;width:1px;height:14px;background:#d7d7d7"></div>
<div class="a" style="left:283px;top:411px;width:1px;height:14px;background:#d7d7d7"></div>
<div class="t" style="left:19px;top:413.2px;font-size:8.6px;line-height:10px">Imports: 0</div>
<svg class="a" style="left:94.5px;top:415px" width="8" height="7"><path d="M0.8 3.8 L3 6 L7.2 1" stroke="#4caf50" stroke-width="1.6" fill="none"/></svg>
<div class="t" style="left:107px;top:413.2px;font-size:8.6px;line-height:10px">Invalid: 0</div>
<div class="t" style="left:178.3px;top:413.2px;font-size:8.6px;line-height:10px">Imagebase: 00400000</div>
<div class="t" style="left:287px;top:413.2px;font-size:8.6px;line-height:10px">新年快乐.exe</div>
<svg class="a" style="left:380.5px;top:417.5px" width="8" height="8"><g fill="#c8c8c8"><rect x="5" y="1" width="1" height="1"/><rect x="3" y="3" width="1" height="1"/><rect x="5" y="3" width="1" height="1"/><rect x="1" y="5" width="1" height="1"/><rect x="3" y="5" width="1" height="1"/><rect x="5" y="5" width="1" height="1"/></g></svg>
</div>
<!-- watermark -->
<svg class="a" style="left:0;top:0;pointer-events:none" width="937" height="519">
<path d="M722.5 194.5 L723.2 194.1 L779.2 279 L781.8 277.2 L782.7 289.3 L772.9 283.6 L775 282.2 Z" fill="#fb3434"/>
</svg>
<div class="a" style="left:720.5px;top:492px;font-size:13.5px;line-height:17px;color:#fff;white-space:pre">安全客</div>
<div class="a" style="left:766px;top:491.5px;font-size:14px;line-height:17px;color:#eee;white-space:pre">(</div>
<div class="a" style="left:776.5px;top:490.5px;font-size:15px;line-height:19px;color:#fff;white-space:pre">www.anquanke.com</div>
<div class="a" style="left:916px;top:491.5px;font-size:14px;line-height:17px;color:#eee;white-space:pre">)</div>
<div class="a" style="left:775px;top:483.5px;font-size:28.5px;line-height:34px;color:rgba(225,225,225,0.72);white-space:pre;transform:scaleX(0.9);transform-origin:0 0">Tide</div>
<div class="a" style="left:825px;top:485px;font-size:25.5px;line-height:32px;letter-spacing:0.5px;color:rgba(225,225,225,0.72);white-space:pre">安全团队</div>
</body></html>
